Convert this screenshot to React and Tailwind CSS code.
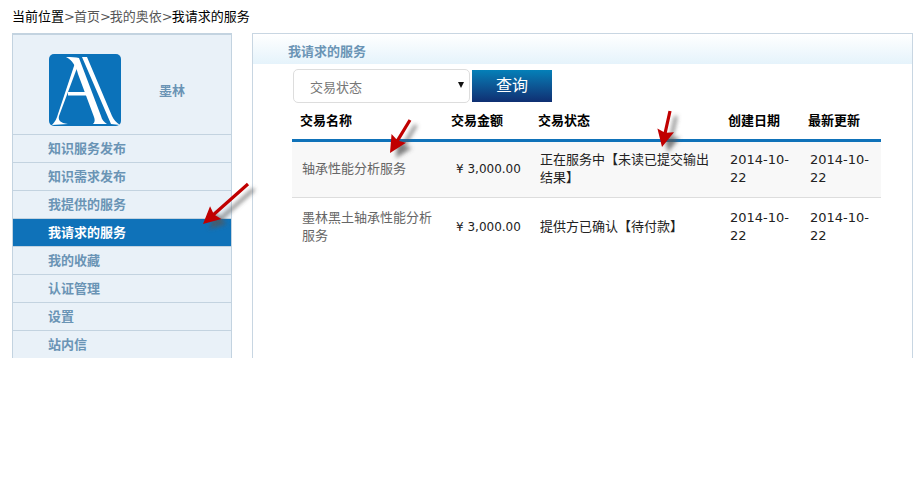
const font = { fontFamily: '"DejaVu Sans", "Noto Sans CJK SC", sans-serif' };

const menu = ['知识服务发布', '知识需求发布', '我提供的服务', '我请求的服务', '我的收藏', '认证管理', '设置', '站内信'];

const rows = [
    { name: '轴承性能分析服务', status: '正在服务中【未读已提交输出结果】', style: 'h-[57px] bg-[#f8f8f8]' },
    { name: '墨林黑土轴承性能分析服务', status: '提供方已确认【待付款】', style: 'h-[59px] bg-white' },
];

function Logo() {
    return (
        <svg width="72" height="72" viewBox="0 0 72 72">
            <rect width="72" height="72" rx="5" fill="#0b72ba" />
            <path d="M17 3 C22 3 27 3 30 4 L52 62 C53 66 55 68 58 70 L44 70 C46 68 46 66 45 63 L29 20 C27 12 23 6 17 3 Z" fill="#fff" />
            <path d="M33 3 L38 3 L63 62 C65 66 67 68 71 71 L62 70 L33 3 Z" fill="#fff" />
            <path d="M26 9 L28 14 L10 62 C9 66 11 69 19 70 L3 71 C6 68 8 64 9 60 Z" fill="#fff" />
            <rect x="19" y="38" width="22" height="3.5" fill="#fff" />
        </svg>
    );
}

// red annotation arrow, drawn over the page
function Arrow({ className, x1, y1, x2, y2, w, h }) {
    const angle = Math.atan2(y2 - y1, x2 - x1);
    const len = Math.hypot(x2 - x1, y2 - y1);
    const shaft = `M0 -1.6 L${len - 15} -1.6 L${len - 17} -8.5 L${len} 0 L${len - 17} 8.5 L${len - 15} 1.6 L0 1.6 Z`;
    const rot = `translate(${x1} ${y1}) rotate(${(angle * 180) / Math.PI})`;
    return (
        <svg className={className} width={w} height={h} viewBox={`0 0 ${w} ${h}`}>
            <defs>
                <filter id="arrow-blur" x="-30%" y="-30%" width="160%" height="160%">
                    <feGaussianBlur stdDeviation="2" />
                </filter>
            </defs>
            <g transform="translate(6 5)" filter="url(#arrow-blur)">
                <path d={shaft} transform={rot} fill="#555" opacity="0.75" />
            </g>
            <path d={shaft} transform={rot} fill="#c00000" />
        </svg>
    );
}

export default function App() {
    return (
        <div className="relative h-[480px] bg-white text-[13px] text-[#222]" style={font}>
            {/* breadcrumb */}
            <div className="h-[33px] pl-3 pt-[8px] text-[13px] leading-[18px] text-black">
                当前位置
                <span className="text-[#555]">
                    <span className="tracking-[-1px]">&gt;</span>首页<span className="tracking-[-1px]">&gt;</span>我的奥依<span className="tracking-[-1px]">&gt;</span>
                </span>
                我请求的服务
            </div>

            <div className="flex h-[325px] gap-5 overflow-hidden pl-3">
                {/* sidebar */}
                <div className="w-[220px] shrink-0 border-x border-t-2 border-[#c3d3e0] bg-[#e9f1f8]">
                    <div className="flex h-[99px] items-center pl-9 pt-[11px]">
                        <Logo />
                        <div className="ml-[38px] mt-[2px] text-[13px] font-bold text-[#6a94b5]">墨林</div>
                    </div>
                    {menu.map((item, i) => (
                        <div
                            key={item}
                            className={`h-[28px] border-t pl-[35px] text-[13px] font-bold leading-[28px] ${i === 3
                                ? 'border-[#c3d3e0] bg-[#0f72b9] text-white'
                                : 'border-[#c3d3e0] text-[#6a94b5]'
                                }`}
                        >
                            {item}
                        </div>
                    ))}
                </div>

                {/* main panel */}
                <div className="w-[661px] shrink-0 border-x border-t border-[#c8d6e2]">
                    <div className="h-[30px] bg-gradient-to-b from-white to-[#e5f3fb] pl-[35px] text-[13px] font-bold leading-[35px] text-[#6a94b5]">
                        我请求的服务
                    </div>

                    <div className="ml-[40px] mt-[5px] flex items-start gap-[2px]">
                        <div className="relative h-[34px] w-[177px] rounded-[5px] border border-[#dddddd] bg-white pl-4 text-[13px] leading-[36px] text-[#777]">
                            交易状态
                            <span className="absolute right-[5px] top-[12px] h-0 w-0 border-x-[3px] border-t-[6px] border-x-transparent border-t-[#111]" />
                        </div>
                        <div className="mt-px h-[32px] w-[80px] bg-gradient-to-b from-[#0480b8] to-[#0f2f72] text-center text-[16px] leading-[32px] text-white">
                            查询
                        </div>
                    </div>

                    <table className="ml-[39px] w-[589px] table-fixed border-collapse">
                        <colgroup>
                            <col className="w-[151px]" />
                            <col className="w-[95px]" />
                            <col className="w-[190px]" />
                            <col className="w-[80px]" />
                            <col className="w-[73px]" />
                        </colgroup>
                        <thead>
                            <tr className="h-[37px] border-b-[3px] border-[#0f72b9] text-left text-[13px] font-bold text-black">
                                <th className="pl-2 font-bold">交易名称</th>
                                <th className="pl-2 font-bold">交易金额</th>
                                <th className="font-bold">交易状态</th>
                                <th className="font-bold">创建日期</th>
                                <th className="font-bold">最新更新</th>
                            </tr>
                        </thead>
                        <tbody>
                            {rows.map((row, i) => (
                                <tr key={i} className={`border-b border-[#dddddd] leading-[18px] last:border-b-0 ${row.style}`}>
                                    <td className="pl-[10px] pr-2 text-[#666]">{row.name}</td>
                                    <td className="pl-[13px] text-[12px]">¥ 3,000.00</td>
                                    <td className="pl-[2px] pr-3">{row.status}</td>
                                    <td className="pl-[2px] pr-3">2014-10-22</td>
                                    <td className="pl-[2px] pr-2">2014-10-22</td>
                                </tr>
                            ))}
                        </tbody>
                    </table>
                </div>
            </div>

            {/* annotation arrows */}
            <Arrow className="absolute left-[195px] top-[175px]" w={70} h={65} x1={53} y1={9} x2={8} y2={49} />
            <Arrow className="absolute left-[382px] top-[115px]" w={45} h={50} x1={28} y1={5} x2={8} y2={38} />
            <Arrow className="absolute left-[650px] top-[105px]" w={40} h={55} x1={20} y1={6} x2={12} y2={42} />
        </div>
    );
}
